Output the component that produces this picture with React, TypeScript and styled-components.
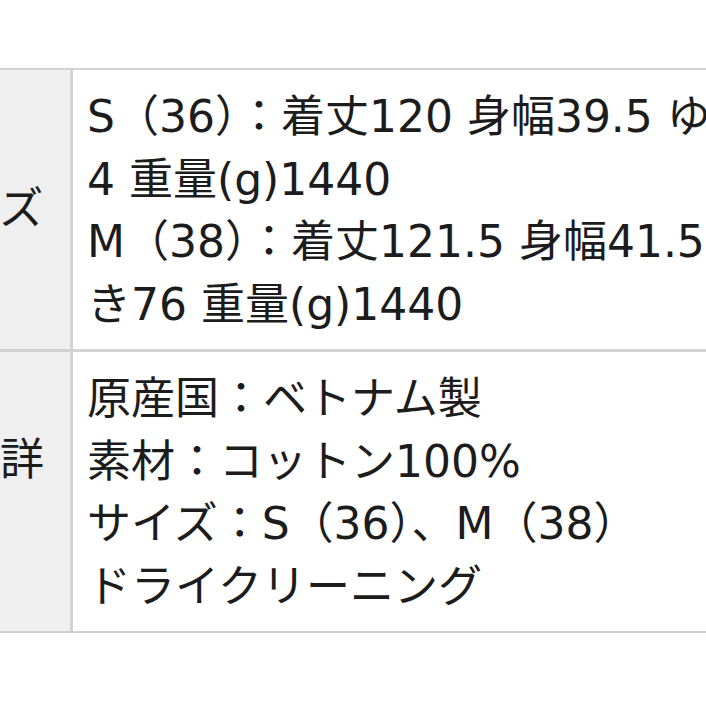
import React from "react";
import styled, { createGlobalStyle } from "styled-components";

const GlobalStyle = createGlobalStyle`
  html, body {
    margin: 0;
    padding: 0;
    background: #ffffff;
    overflow: hidden;
  }
  body {
    font-family: "DejaVu Sans", "Noto Sans CJK JP", sans-serif;
    color: #1c1c1c;
  }
`;

const Page = styled.div`
  width: 706px;
  height: 706px;
  overflow: hidden;
  padding-top: 68px;
  box-sizing: border-box;
`;

const Table = styled.div`
  width: 1100px;
  display: grid;
  grid-template-columns: 70px 1fr;
  column-gap: 3px;
  row-gap: 3px;
  padding: 2px 0;
  background: #d2d2d2;
`;

const HeadCell = styled.div`
  background: #efefef;
  overflow: hidden;
  display: flex;
  align-items: center;
  justify-content: flex-end;
`;

const HeadText = styled.div`
  flex: 0 0 132px;
  margin-right: 26px;
  text-align: center;
  font-size: 44px;
  line-height: 62.5px;
`;

const BodyCell = styled.div`
  background: #ffffff;
  padding: 16px 0 13px 14px;
  font-size: 44px;
  line-height: 62.5px;
`;

const Line = styled.div`
  white-space: nowrap;
`;

const rows = [
  {
    head: ["サイズ"],
    lines: [
      "S（36）：着丈120 身幅39.5 ゆき7",
      "4 重量(g)1440",
      "M（38）：着丈121.5 身幅41.5 ゆ",
      "き76 重量(g)1440",
    ],
  },
  {
    head: ["商品詳", "細"],
    lines: [
      "原産国：ベトナム製",
      "素材：コットン100%",
      "サイズ：S（36）、M（38）",
      "ドライクリーニング",
    ],
  },
];

const App = () => {
  return (
    <>
      <GlobalStyle />
      <Page>
        <Table>
          {rows.map((row) => (
            <React.Fragment key={row.head.join("")}>
              <HeadCell>
                <HeadText>
                  {row.head.map((h) => (
                    <Line key={h}>{h}</Line>
                  ))}
                </HeadText>
              </HeadCell>
              <BodyCell>
                {row.lines.map((l) => (
                  <Line key={l}>{l}</Line>
                ))}
              </BodyCell>
            </React.Fragment>
          ))}
        </Table>
      </Page>
    </>
  );
};

export default App;
